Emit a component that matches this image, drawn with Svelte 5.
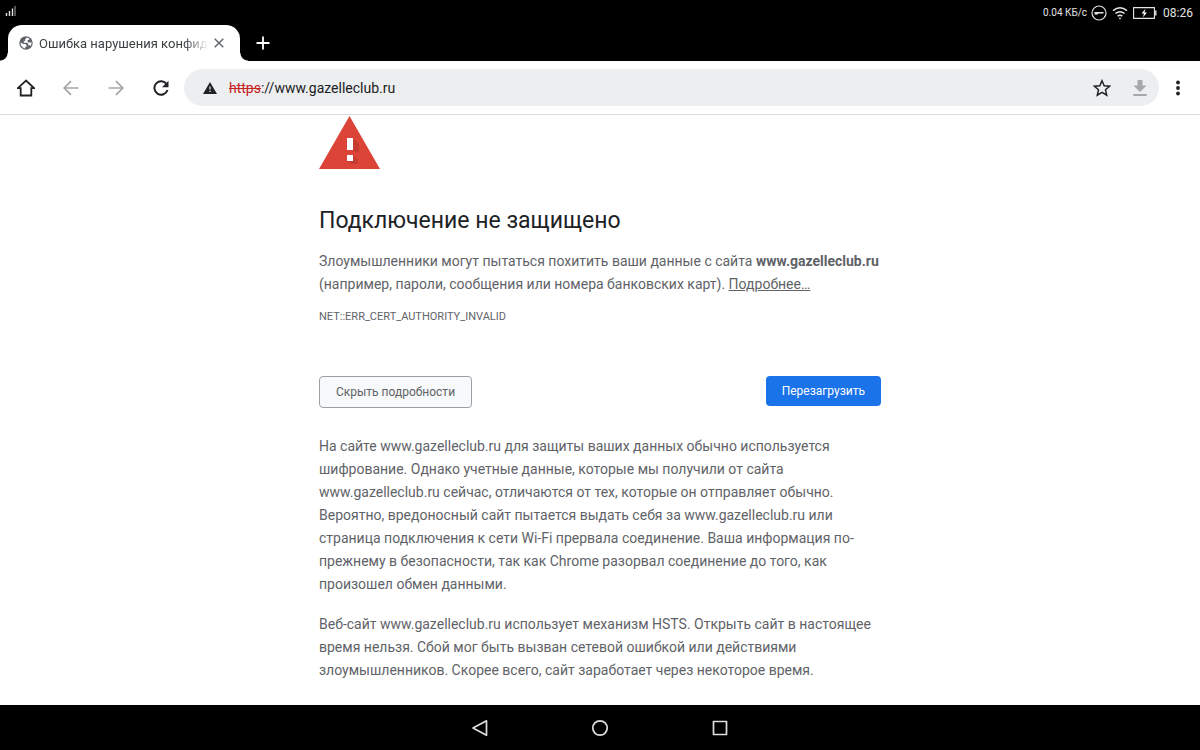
<script>
  let url = $state('://www.gazelleclub.ru');
  const site = 'www.gazelleclub.ru';
</script>

<div class="screen">
  <header class="status">
    <svg class="signal" width="12" height="12" viewBox="0 0 12 12" aria-hidden="true">
      <path d="M1.500 8v3M4.500 6v5M7.500 3.500v7.500" stroke="#e4e4e4" stroke-width="1.400" />
      <path d="M10 1v10" stroke="#777" stroke-width="1.400" />
    </svg>
    <div class="indicators">
      <span class="speed">0.04 КБ/с</span>
      <svg width="16" height="16" viewBox="0 0 16 16" fill="none" aria-hidden="true">
        <circle cx="8" cy="8" r="7" stroke="#e4e4e4" stroke-width="1.200" />
        <path d="M3.500 7h9v1.400H7.500L6.500 9.400h-3z" fill="#e4e4e4" />
      </svg>
      <svg class="wifi" width="16" height="14" viewBox="0 0 16 14" fill="none" aria-hidden="true">
        <path d="M1 4.600Q8-1 15 4.600M3.400 7.500q4.600-3.700 9.200 0M5.600 10.200q2.400-1.900 4.800 0" stroke="#e4e4e4" stroke-width="1.500" />
        <path d="M6.500 11.800h3L8 13.500z" fill="#e4e4e4" />
      </svg>
      <svg class="battery" width="24" height="12" viewBox="0 0 24 12" fill="none" aria-hidden="true">
        <path d="M.6.6h20.800v10.800H.6z" stroke="#e4e4e4" stroke-width="1.100" />
        <path d="M22.800 3.500v5" stroke="#e4e4e4" stroke-width="1.400" />
        <path d="M12.500 1.800 8.500 6.600h2.400L10 10.200l4-4.800h-2.500z" fill="#fff" />
      </svg>
      <span class="clock">08:26</span>
    </div>
  </header>

  <div class="tabs">
    <div class="tab">
      <svg width="14" height="14" viewBox="0 0 14 14" aria-hidden="true">
        <circle cx="7" cy="7" r="6.700" fill="#5f6368" />
        <path d="M7.800 1.600 6.200 3.200v1.500l-1.500.8v1.300h3.500l1 1v1.400h1.500l1 .9a5.400 5.400 0 0 0 .8-3.900L11 6.600H9.300l-.8-1.300V3.900h1.300l.6-1.200a5.400 5.400 0 0 0-2.600-1.100zM1.600 6.600a5.400 5.400 0 0 0 4.700 5.800v-1.700h1.300V9.200L6.300 7.900H4.200z" fill="#fff" />
      </svg>
      <span class="title">Ошибка нарушения конфид</span>
      <button class="close" aria-label="Закрыть вкладку">
        <svg width="10" height="10" viewBox="0 0 10 10"><path d="m.7.7 8.600 8.600M9.300.7.7 9.300" stroke="#5f6368" stroke-width="1.400" /></svg>
      </button>
    </div>
    <button class="add" aria-label="Новая вкладка">
      <svg width="14" height="14" viewBox="0 0 14 14"><path d="M7 .5v13M.5 7h13" stroke="#fff" stroke-width="1.800" /></svg>
    </button>
  </div>

  <nav class="toolbar">
    <button aria-label="Главная">
      <svg width="18" height="18" viewBox="0 0 18 18"><path d="M9 1.600.9 9.200h2.800v7.300h10.600V9.200h2.800z" fill="none" stroke="#202124" stroke-width="1.800" /></svg>
    </button>
    <button aria-label="Назад">
      <svg width="16" height="16" viewBox="0 0 16 16"><path d="M15.500 8H1.500M8 1.200 1.200 8 8 14.800" fill="none" stroke="#a5a6a8" stroke-width="1.700" /></svg>
    </button>
    <button aria-label="Вперёд">
      <svg width="16" height="16" viewBox="0 0 16 16"><path d="M.5 8h14M8 1.200 14.800 8 8 14.800" fill="none" stroke="#a5a6a8" stroke-width="1.700" /></svg>
    </button>
    <button aria-label="Обновить">
      <svg width="16" height="16" viewBox="0 0 16 16"><path d="M13.700 4.300A6.700 6.700 0 1 0 14.500 10" fill="none" stroke="#202124" stroke-width="2" /><path d="M15.500.7v6.500H9z" fill="#202124" /></svg>
    </button>
    <div class="address">
      <svg class="warn" width="14" height="12" viewBox="0 0 14 12" aria-hidden="true"><path d="M7 0 14 12H0z" fill="#202124" /><path d="M6.300 4.500h1.400v3H6.300zM6.300 8.700h1.400V10H6.300z" fill="#d5d6d8" /></svg>
      <s>https</s><input aria-label="Адрес сайта" bind:value={url} />
      <button aria-label="Добавить в закладки">
        <svg width="18" height="18" viewBox="0 0 18 18"><path d="m9 1.700 2.200 5 5.400.5-4.100 3.600 1.200 5.300L9 13.300l-4.700 2.800 1.200-5.300-4.100-3.600 5.400-.5z" fill="none" stroke="#202124" stroke-width="1.500" /></svg>
      </button>
      <button aria-label="Скачать страницу">
        <svg width="14" height="16" viewBox="0 0 14 16"><path d="M4.500 0h5v5.500h4L7 12 .5 5.500h4zM.3 14h13.400v1.900H.3z" fill="#a5a7a9" /></svg>
      </button>
    </div>
    <button class="menu" aria-label="Меню">
      <svg width="4" height="16" viewBox="0 0 4 16" fill="#202124"><circle cx="2" cy="2.500" r="1.900" /><circle cx="2" cy="8" r="1.900" /><circle cx="2" cy="13.500" r="1.900" /></svg>
    </button>
  </nav>

  <main>
    <article>
      <svg width="62" height="53" viewBox="0 0 62 53" aria-hidden="true">
        <path d="M30.500 0 61 53H0z" fill="#db4437" />
        <path d="m34 22 6 6v8l-6-1zM34 39l5 5v4h-6l-5-3z" fill="#c63b30" />
        <path d="M28 22h6v12h-6zM28 39h6v6h-6z" fill="#fff" />
      </svg>
      <h1>Подключение не защищено</h1>
      <p>Злоумышленники могут пытаться похитить ваши данные с сайта <strong>{site}</strong> (например, пароли, сообщения или номера банковских карт). <a href="#details">Подробнее…</a></p>
      <div class="code">NET::ERR_CERT_AUTHORITY_INVALID</div>
      <div class="actions">
        <button class="secondary">Скрыть подробности</button>
        <button class="primary">Перезагрузить</button>
      </div>
      <section id="details">
        <p>На сайте {site} для защиты ваших данных обычно используется шифрование. Однако учетные данные, которые мы получили от сайта {site} сейчас, отличаются от тех, которые он отправляет обычно. Вероятно, вредоносный сайт пытается выдать себя за {site} или страница подключения к сети Wi-Fi прервала соединение. Ваша информация по-прежнему в безопасности, так как Chrome разорвал соединение до того, как произошел обмен данными.</p>
        <p>Веб-сайт {site} использует механизм HSTS. Открыть сайт в настоящее время нельзя. Сбой мог быть вызван сетевой ошибкой или действиями злоумышленников. Скорее всего, сайт заработает через некоторое время.</p>
      </section>
    </article>
  </main>

  <footer class="system">
    <button aria-label="Системная кнопка «Назад»">
      <svg width="18" height="18" viewBox="0 0 18 18"><path d="M15.500 1.800v14.400L2 9z" fill="none" stroke="#dedede" stroke-width="1.700" stroke-linejoin="round" /></svg>
    </button>
    <button aria-label="Домой">
      <svg width="18" height="18" viewBox="0 0 18 18"><circle cx="9" cy="9" r="7.200" fill="none" stroke="#dedede" stroke-width="1.700" /></svg>
    </button>
    <button aria-label="Недавние приложения">
      <svg width="18" height="18" viewBox="0 0 18 18"><path d="M2.500 2.500h13v13h-13z" fill="none" stroke="#dedede" stroke-width="1.700" stroke-linejoin="round" /></svg>
    </button>
  </footer>
</div>

<style>
  :global(body) { margin: 0; background: #fff; }
  .screen { min-height: 100vh; display: flex; flex-direction: column; background: #fff; font-family: Roboto, sans-serif; color: #5f6368; }
  button { border: 0; padding: 0; background: none; font: inherit; display: flex; align-items: center; justify-content: center; cursor: pointer; }
  svg { display: block; flex: none; }
  .status { height: 25px; background: #000; color: #e4e4e4; display: flex; justify-content: space-between; padding: 0 7px 0 5px; }
  .signal { margin-top: 5px; }
  .indicators { display: flex; align-items: center; gap: 4px; }
  .speed { font-size: 10px; }
  .wifi { margin-left: 1px; }
  .battery { margin-left: 1px; }
  .clock { font-size: 12px; margin-left: 2px; }
  .tabs { height: 36px; background: #000; display: flex; padding-left: 8px; }
  .tab { width: 232px; box-sizing: border-box; background: #fff; border-radius: 14px 14px 0 0; display: flex; align-items: center; padding: 0 16px 0 11px; position: relative; }
  .tab::before, .tab::after { content: ''; position: absolute; bottom: 0; width: 8px; height: 8px; }
  .tab::before { right: 100%; background: radial-gradient(circle at 0 0, #000 7px, #fff 8px); }
  .tab::after { left: 100%; background: radial-gradient(circle at 100% 0, #000 7px, #fff 8px); }
  .title { flex: 1; min-width: 0; margin: 0 6px; overflow: hidden; white-space: nowrap; font-size: 13px; color: #3c4043; mask-image: linear-gradient(to right, #000 86%, transparent); }
  .add { width: 30px; margin-left: 8px; }
  .toolbar { height: 53px; display: flex; align-items: center; padding: 0 3px; border-bottom: 1px solid #dcdddf; }
  .toolbar > button { width: 45px; height: 45px; }
  .address { flex: 1; min-width: 0; height: 37px; margin-left: 1px; border-radius: 19px; background: #edeeef; display: flex; align-items: center; padding-left: 19px; font-size: 14px; color: #202124; }
  .warn { margin-right: 12px; }
  s { color: #c5221f; }
  input { flex: 1; min-width: 0; border: 0; padding: 0; background: none; font: inherit; color: inherit; outline: 0; }
  .address button { width: 38px; height: 38px; }
  .toolbar > .menu { width: 38px; }
  main { flex: 1; padding: 1px 24px 16px; }
  article { max-width: 562px; margin: 0 auto; font-size: 14px; line-height: 23px; }
  h1 { margin: 37px 0 14px; font-size: 23px; line-height: 30px; font-weight: 400; color: #202124; }
  p { margin: 0; }
  a { color: inherit; }
  .code { margin-top: 11px; font-size: 11px; line-height: 20px; }
  .actions { margin: 49px 0 27px; display: flex; justify-content: space-between; align-items: flex-start; font-size: 12px; }
  .actions button { border-radius: 4px; padding: 0 16px; }
  .actions .secondary { height: 32px; border: 1px solid #9aa0a6; background: #f8f9fa; color: #5f6368; }
  .actions .primary { height: 30px; background: #1a73e8; color: #fff; }
  section { display: grid; gap: 17px; }
  .system { height: 45px; background: #000; display: flex; justify-content: center; gap: 75px; }
  .system button { width: 45px; }
</style>
